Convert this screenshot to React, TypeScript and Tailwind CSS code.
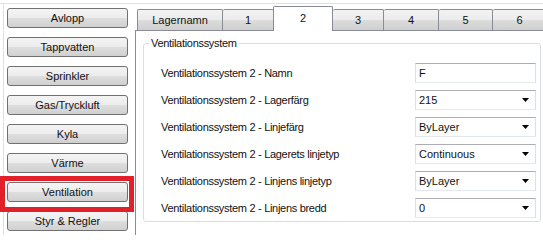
import React from "react";

const buttons = ["Avlopp", "Tappvatten", "Sprinkler", "Gas/Tryckluft", "Kyla", "Värme", "Ventilation", "Styr & Regler"];

const tabs = [
  { label: "Lagernamn", w: "w-[86px] border-l" },
  { label: "1", w: "w-[51px]" },
  { label: "2", w: "w-[60px]", selected: true },
  { label: "3", w: "w-[51px]" },
  { label: "4", w: "w-[55px]" },
  { label: "5", w: "w-[54px]" },
  { label: "6", w: "w-[54px]" },
];

const rows: { label: string; value: string; combo: boolean }[] = [
  { label: "Ventilationssystem 2 - Namn", value: "F", combo: false },
  { label: "Ventilationssystem 2 - Lagerfärg", value: "215", combo: true },
  { label: "Ventilationssystem 2 - Linjefärg", value: "ByLayer", combo: true },
  { label: "Ventilationssystem 2 - Lagerets linjetyp", value: "Continuous", combo: true },
  { label: "Ventilationssystem 2 - Linjens linjetyp", value: "ByLayer", combo: true },
  { label: "Ventilationssystem 2 - Linjens bredd", value: "0", combo: true },
];

export default function App() {
  return (
    <div className="relative w-[543px] h-[235px] overflow-hidden bg-white text-[#111] font-['Liberation_Sans',Arial,sans-serif] text-[11px] leading-none">
      <div className="h-[3px]" />
      <div className="flex h-[232px] border-t border-[#e0e0e0]">
        {/* left column */}
        <div className="shrink-0 ml-[3px] w-[132px] border-l border-[#e0e0e0] pl-[3px] pt-[4px] flex flex-col gap-[9px]">
          {buttons.map((b) => (
            <div
              key={b}
              className="w-[121px] h-[20px] shrink-0 rounded-[3px] border border-[#707070] bg-[linear-gradient(to_bottom,#f4f4f4_0%,#ececec_50%,#dedede_51%,#d0d0d0_100%)] flex items-center justify-center"
            >
              {b}
            </div>
          ))}
        </div>
        {/* right column */}
        <div className="flex-1 min-w-0 overflow-hidden flex flex-col">
          <div className="h-[26px] pl-[2px] flex items-end">
            {tabs.map((t) =>
              t.selected ? (
                <div
                  key={t.label}
                  className={`${t.w} shrink-0 -ml-[1px] h-[25px] -mb-[1px] relative z-10 bg-white border-x border-t border-[#898c95] rounded-t-[2px] flex items-center justify-center pb-[2px]`}
                >
                  {t.label}
                </div>
              ) : (
                <div
                  key={t.label}
                  className={`${t.w} h-[21px] shrink-0 border-r border-t border-[#898c95] rounded-t-[2px] bg-[linear-gradient(to_bottom,#f3f3f3_0%,#ebebeb_50%,#dddddd_51%,#cfcfcf_100%)] flex items-center justify-center`}
                >
                  {t.label}
                </div>
              )
            )}
          </div>
          <div className="flex-1 border-l border-t border-[#898c95] bg-white pl-[7px] pt-[12px]">
            <div className="relative w-[398px] h-[179px] border border-[#d5dfe5] rounded-[3px] pl-[17px] pr-[4px] pt-[19px] flex flex-col gap-[7px]">
              <div className="absolute left-[5px] -top-[7px] bg-white px-[2px] leading-[13px] tracking-[-0.3px]">Ventilationssystem</div>
              {rows.map((r) => (
                <div key={r.label} className="h-[20px] flex items-center justify-between">
                  <span className="tracking-[-0.3px]">{r.label}</span>
                  <div className="w-[121px] h-[20px] border border-[#abadb3] border-b-[#e3e9ef] border-x-[#dbdfe6] bg-white flex items-center pl-[3px] pr-[6px]">
                    <span className="flex-1">{r.value}</span>
                    {r.combo && (
                      <svg width="7" height="4" viewBox="0 0 7 4">
                        <path d="M0 0H7L3.5 4Z" fill="#000" />
                      </svg>
                    )}
                  </div>
                </div>
              ))}
            </div>
          </div>
        </div>
      </div>
      {/* red highlight */}
      <div className="absolute left-0 top-[176px] w-[134px] h-[36px] border-[5px] border-[#e2202a] pointer-events-none" />
    </div>
  );
}
